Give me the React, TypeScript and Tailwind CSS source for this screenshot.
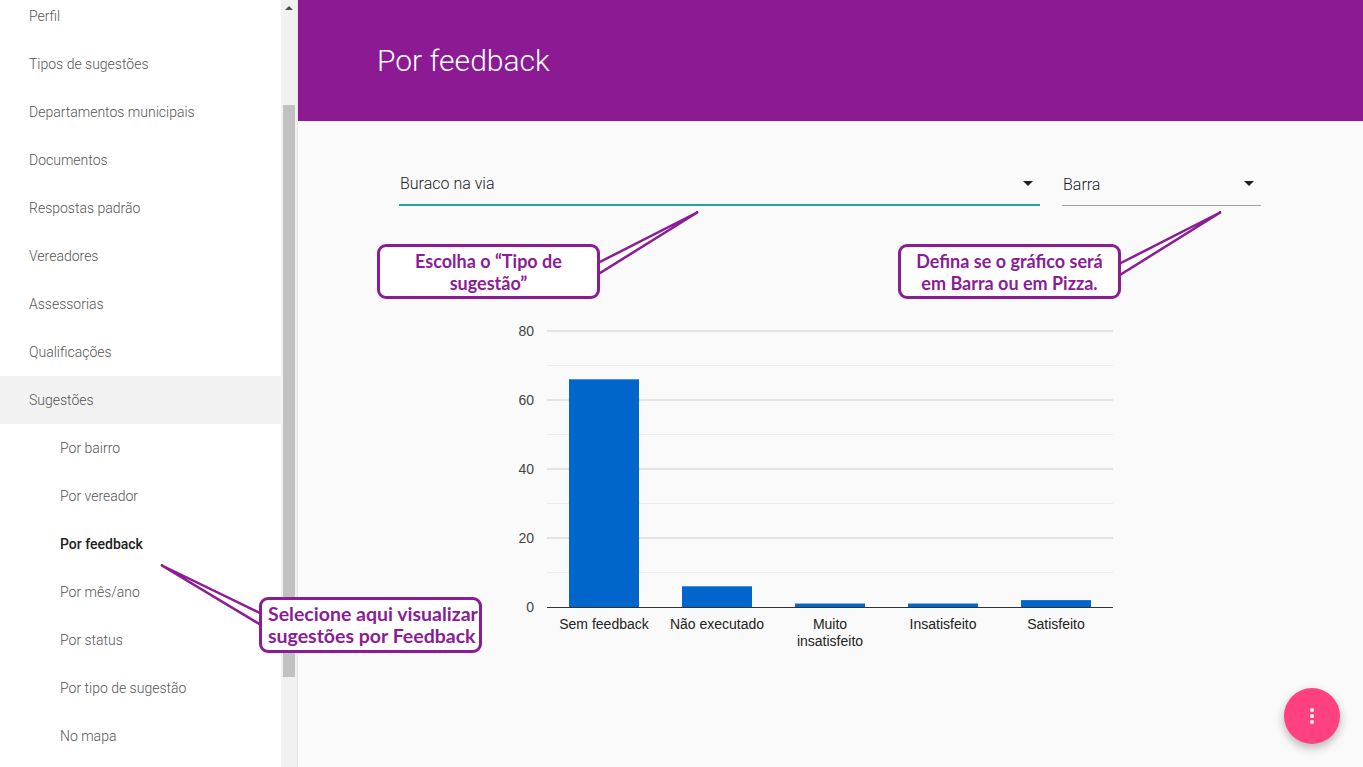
import React from 'react'

const menu = [
  { label: 'Perfil' },
  { label: 'Tipos de sugestões' },
  { label: 'Departamentos municipais' },
  { label: 'Documentos' },
  { label: 'Respostas padrão' },
  { label: 'Vereadores' },
  { label: 'Assessorias' },
  { label: 'Qualificações' },
  { label: 'Sugestões', active: true },
  { label: 'Por bairro', sub: true },
  { label: 'Por vereador', sub: true },
  { label: 'Por feedback', sub: true, current: true },
  { label: 'Por mês/ano', sub: true },
  { label: 'Por status', sub: true },
  { label: 'Por tipo de sugestão', sub: true },
  { label: 'No mapa', sub: true },
]

const bars = [
  { label: ['Sem feedback'], value: 66 },
  { label: ['Não executado'], value: 6 },
  { label: ['Muito', 'insatisfeito'], value: 1 },
  { label: ['Insatisfeito'], value: 1 },
  { label: ['Satisfeito'], value: 2 },
]

function Chart() {
  const base = 288
  const scale = 3.45
  const ticks = [0, 10, 20, 30, 40, 50, 60, 70, 80]
  return (
    <svg width="620" height="340" viewBox="0 0 620 340" style={{ fontFamily: '"Liberation Sans", Arial, sans-serif' }}>
      {ticks.map((t) => {
        const y = base - t * scale
        const major = t % 20 === 0
        return (
          <g key={t}>
            {t > 0 && <line x1="47" x2="613" y1={y} y2={y} stroke={major ? '#cccccc' : '#ebebeb'} strokeWidth="1" />}
            {major && (
              <text x="34" y={y + 5} textAnchor="end" fontSize="14" fill="#444">
                {t}
              </text>
            )}
          </g>
        )
      })}
      {bars.map((b, i) => {
        const x = 69 + i * 113
        const h = b.value * scale
        return (
          <g key={i}>
            <rect x={x} y={base - h} width="70" height={h} fill="#0066cc" />
            {b.label.map((l, j) => (
              <text key={j} x={x + 35} y={310 + j * 17} textAnchor="middle" fontSize="14" fill="#222">
                {l}
              </text>
            ))}
          </g>
        )
      })}
      <line x1="47" x2="613" y1={base + 0.5} y2={base + 0.5} stroke="#333" strokeWidth="1" />
    </svg>
  )
}

function Select({ value, focused, className }: { value: string; focused?: boolean; className: string }) {
  return (
    <div className={`${className} relative flex h-[42px] items-center border-b ${focused ? 'border-b-2 border-[#26a69a]' : 'border-[#9e9e9e]'}`}>
      <span className="pl-[1px] text-[16px] font-light text-[#212121]">{value}</span>
      <span className="absolute right-[7px] top-[17px] h-0 w-0 border-x-[5px] border-t-[5px] border-x-transparent border-t-[#212121]" />
    </div>
  )
}

function Callout({ lines, className, align = 'center' }: { lines: string[]; className: string; align?: 'center' | 'left' }) {
  return (
    <div
      className={`absolute z-10 flex flex-col justify-center rounded-[9px] border-[3px] border-[#8b1c96] bg-white px-[6px] font-bold leading-[22px] text-[#8b1c96] ${align === 'center' ? 'items-center text-center' : 'items-start'} ${className}`}
      style={{ fontFamily: 'Lato, "Open Sans", sans-serif' }}
    >
      {lines.map((l) => (
        <span key={l} className="whitespace-nowrap">{l}</span>
      ))}
    </div>
  )
}

export default function App() {
  return (
    <div className="relative flex h-[767px] w-[1363px] overflow-hidden bg-[#fafafa]" style={{ fontFamily: 'Roboto, "Noto Sans", sans-serif' }}>
      <aside className="flex h-full w-[281px] shrink-0 flex-col overflow-hidden bg-white">
        <ul className="-mt-[8px]">
          {menu.map((m) => (
            <li
              key={m.label}
              className={`flex h-[48px] items-center text-[14px] ${m.sub ? 'pl-[60px]' : 'pl-[29px]'} ${m.active ? 'bg-[#f2f2f2]' : ''} ${m.current ? 'font-medium text-[#212121]' : 'font-light text-[#555555]'}`}
            >
              {m.label}
            </li>
          ))}
        </ul>
      </aside>

      <div className="flex h-full w-[16px] shrink-0 flex-col items-center bg-[#f1f1f1]">
        <span className="mt-[6px] h-0 w-0 border-x-[4px] border-b-[4px] border-x-transparent border-b-[#505050]" />
        <div className="mt-[95px] h-[572px] w-[12px] bg-[#c1c1c1]" />
      </div>

      <main className="relative flex h-full flex-1 flex-col border-l border-[#e6e6e6]">
        <header className="flex h-[121px] shrink-0 items-center bg-[#8b1a93] pl-[79px]">
          <h1 className="text-[30px] font-light text-white">Por feedback</h1>
        </header>

        <div className="flex gap-[22px] pl-[101px] pt-[43px]">
          <Select value="Buraco na via" focused className="w-[641px]" />
          <Select value="Barra" className="w-[199px]" />
        </div>

        <div className="mt-[113px] pl-[202px]">
          <Chart />
        </div>

        <button className="absolute bottom-[23px] right-[23px] flex h-[56px] w-[56px] flex-col items-center justify-center gap-[2px] rounded-full bg-[#ff4081] shadow-[0_4px_10px_rgba(0,0,0,0.28)]">
          <span className="h-[4px] w-[4px] rounded-full bg-white" />
          <span className="h-[4px] w-[4px] rounded-full bg-white" />
          <span className="h-[4px] w-[4px] rounded-full bg-white" />
        </button>
      </main>

      <svg className="pointer-events-none absolute left-0 top-0" width="1363" height="767">
        <polygon points="592,266 698,212 592,278" fill="white" stroke="#8b1c96" strokeWidth="2.5" strokeLinejoin="miter" />
        <polygon points="1115,266 1221,212 1115,278" fill="white" stroke="#8b1c96" strokeWidth="2.5" />
        <polygon points="266,616 161,565 266,628" fill="white" stroke="#8b1c96" strokeWidth="2.5" />
      </svg>

      <Callout lines={['Escolha o “Tipo de', 'sugestão”']} className="left-[377px] top-[244px] h-[55px] w-[223px] text-[18px]" />
      <Callout lines={['Defina se o gráfico será', 'em Barra ou em Pizza.']} className="left-[898px] top-[244px] h-[55px] w-[223px] text-[18px]" />
      <Callout lines={['Selecione aqui visualizar', 'sugestões por Feedback']} align="left" className="left-[259px] top-[597px] h-[56px] w-[223px] text-[19.5px]" />
    </div>
  )
}
